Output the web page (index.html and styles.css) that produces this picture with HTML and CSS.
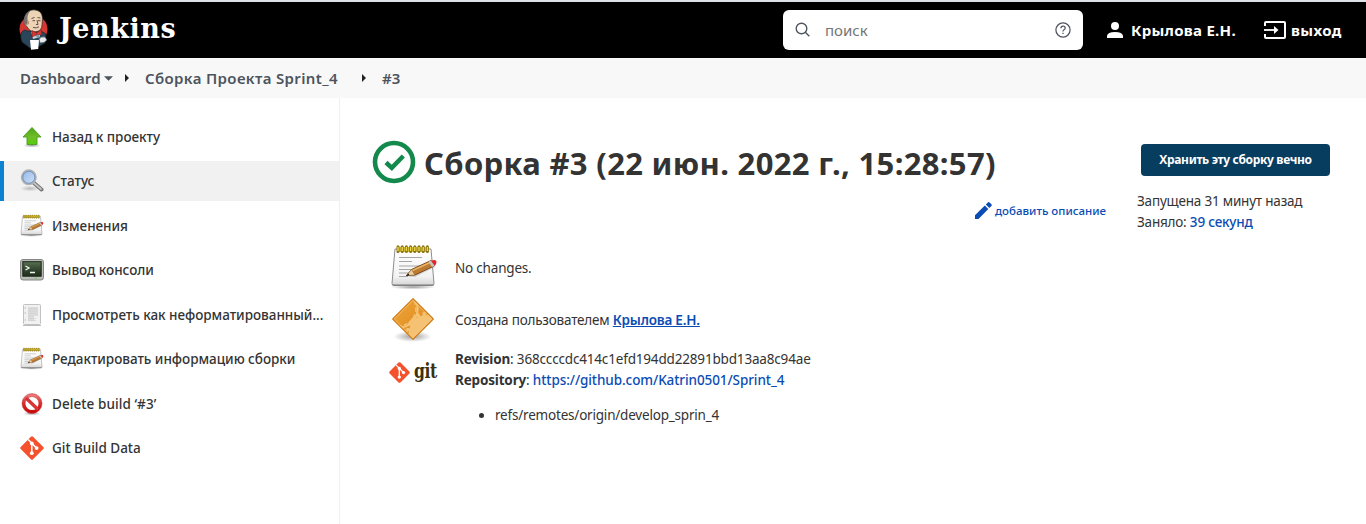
FILE: index.html
```html
<!DOCTYPE html>
<html lang="ru">
<head>
<meta charset="utf-8">
<title>Сборка #3 - Jenkins</title>
<link rel="stylesheet" href="styles.css">
</head>
<body>
<svg class="defs" width="0" height="0" aria-hidden="true">
  <defs>
    <linearGradient id="green" x2="0" y2="1"><stop stop-color="#49a414"/><stop offset=".55" stop-color="#70bd27"/><stop offset="1" stop-color="#55cf08"/></linearGradient>
    <linearGradient id="paper" x2="0" y2="1"><stop stop-color="#fff"/><stop offset=".75" stop-color="#f3f3f3"/><stop offset="1" stop-color="#d4d4d4"/></linearGradient>
    <linearGradient id="lens" x2="1" y2="1"><stop stop-color="#8fb6e8"/><stop offset="1" stop-color="#d3e4f8"/></linearGradient>
    <linearGradient id="screen" x2="0" y2="1"><stop stop-color="#587052"/><stop offset=".5" stop-color="#354832"/><stop offset="1" stop-color="#1e2f1b"/></linearGradient>
    <linearGradient id="ban" x2="0" y2="1"><stop stop-color="#e77878"/><stop offset=".5" stop-color="#d62d2d"/><stop offset="1" stop-color="#c80b0b"/></linearGradient>
    <linearGradient id="amber" x2="1" y2="1"><stop stop-color="#eda63c"/><stop offset="1" stop-color="#dc8413"/></linearGradient>
    <radialGradient id="shade"><stop stop-color="#000" stop-opacity=".38"/><stop offset="1" stop-color="#000" stop-opacity="0"/></radialGradient>
    <clipPath id="diamond"><path d="M22.500 2.500L42.500 22.500 22.500 42.500 2.500 22.500z"/></clipPath>
    <symbol id="notepad" viewBox="0 0 48 48">
      <ellipse cx="23" cy="43" rx="23" ry="2.500" fill="url(#shade)"/>
      <path d="M5 5h36l3 34.500q0 2-2 2H4q-2 0-2-2z" fill="url(#paper)" stroke="#8d8d8d"/>
      <path d="M2.500 41h41" stroke="#777" stroke-width="1.200"/>
      <path d="M9 13.500h23M9 17.500h13M9 22h24M9 25.500h16M9 29h11M9 32.500h9" stroke="#a5a5a5" stroke-width="1"/>
      <path d="M7 3h32v5H7z" fill="#d1bd3f"/>
      <path d="M8 2.800v4.800M12.200 2.800v4.800M16.400 2.800v4.800M20.600 2.800v4.800M24.800 2.800v4.800M29 2.800v4.800M33.200 2.800v4.800M37.400 2.800v4.800" stroke="#8a7414" stroke-width="3" stroke-linecap="round"/>
      <path d="M8 3v4M12.200 3v4M16.400 3v4M20.600 3v4M24.800 3v4M29 3v4M33.200 3v4M37.400 3v4" stroke="#efd94a" stroke-width="1.400"/>
      <path d="M18 33l24-11 3 1-20 10z" fill="#000" opacity=".14"/>
      <path d="M16.500 31.500l5-6L41 16.500l3.800 5.200L25 31z" fill="#bd7a31" stroke="#6f410f" stroke-width=".9"/>
      <path d="M22 26.700l18.500-8.400" stroke="#e8b468" stroke-width="1.500"/>
      <path d="M16.500 31.500l5-6 3.300 5.400z" fill="#ecd0a0" stroke="#8b6636" stroke-width=".5"/><path d="M16 32l2.200-2.600 1.300 1.900z" fill="#111"/>
      <path d="M38.500 17.700l2.500-1.200 3.800 5.200-2.800 1.300z" fill="#c4c4c4"/>
      <path d="M41 16.500q5.500-1.700 5.500 1.300 0 2.500-1.700 3.900z" fill="#e7252b"/>
    </symbol>
    <symbol id="gitmark" viewBox="0 0 24 24">
      <path d="M10.900.7q1.100-1 2.200 0l10.200 10.200q1 1.100 0 2.200L13.100 23.300q-1.100 1-2.200 0L.7 13.100q-1-1.100 0-2.200z" fill="#f4512c"/>
      <path d="M8.200 3.600l3.600 3.700v9.600M12 7.500l4.600 4.600" fill="none" stroke="#fff" stroke-width="1.500"/>
      <circle cx="11.800" cy="7.400" r="1.900" fill="#fff"/><circle cx="11.800" cy="17.200" r="1.900" fill="#fff"/><circle cx="16.600" cy="12.100" r="1.900" fill="#fff"/>
    </symbol>
  </defs>
</svg>

<header class="topbar">
  <a class="brand">
    <svg class="butler" width="30" height="42" viewBox="0 0 30 42">
      <ellipse cx="14.500" cy="20" rx="14" ry="13.500" fill="#d33833"/>
      <path d="M2 24q-1 4 1 9l8 6 8-1 7-4 1-9-5-3H9l-4-1z" fill="#2b4658" stroke="#142530" stroke-width=".7"/>
      <path d="M12 22l5 5 4-5v6l-7 2z" fill="#c9d0d4"/>
      <path d="M6 9Q8 .6 15 .8q8 .4 8.500 8l-.5 7q0 6-6 7-6 .5-9-5Q5 16 6 12z" fill="#edd3b6" stroke="#2b2725" stroke-width=".7"/>
      <path d="M5.500 15Q3.500 7 8.500 3.300l3-1.600q-3.500 4-3 8.300L8.500 16z" fill="#77716d"/>
      <path d="M7.500 11q2.500 0 2 4" fill="none" stroke="#a98065" stroke-width=".8"/>
      <path d="M12.500 9.500l3-1M18.500 8.500l3 .5M13.500 11.700h2.500M19 11.700h2.500M18 11l1 4.500h-2M14 18.500q3.500 1 6-.7" fill="none" stroke="#54423a" stroke-width=".9"/>
      <path d="M13 21.500l4.500 2.500 4.500-3.500 1 5.500-5-.5-5 2.500z" fill="#d33833" stroke="#7c1714" stroke-width=".5"/>
      <circle cx="19" cy="27.500" r="1.600" fill="#7896a7"/>
      <path d="M11 31h9l-.8 9-7.200.7z" fill="#fff"/>
      <path d="M20 30q2-3 6-2l2 3-3 2.500-4 .5z" fill="#e6e8ea" stroke="#43525c" stroke-width=".7"/>
    </svg>
    <span class="brand-name">Jenkins</span>
  </a>
  <div class="search">
    <svg width="16" height="16" viewBox="0 0 16 16" fill="none" stroke="#4d545d" stroke-width="1.400"><circle cx="6.500" cy="6.500" r="5.300"/><path d="M10.300 10.300l4 4"/></svg>
    <span class="search-text">поиск</span>
    <svg width="16" height="16" viewBox="0 0 16 16" fill="none" stroke="#4d545d" stroke-width="1.250"><circle cx="8" cy="8" r="7.100"/><path d="M5.900 6.200q.1-2.200 2.200-2.200 2.100.1 2.100 2 0 1.100-1.200 1.700Q8 8.200 8 9.500"/><path d="M8 10.800v1.300"/></svg>
  </div>
  <a class="user">
    <svg width="16" height="16" viewBox="0 0 16 16" fill="#fff"><circle cx="8" cy="4" r="4"/><path d="M0 16v-2q.5-4 8-4t8 4v2z"/></svg>
    <span class="user-name">Крылова Е.Н.</span>
  </a>
  <a class="logout">
    <svg width="22" height="18" viewBox="0 0 22 18" fill="none" stroke="#fff" stroke-width="2"><path d="M1 5V2q0-1 1-1h18q1 0 1 1v14q0 1-1 1H2q-1 0-1-1v-3"/><path d="M0 9h12" stroke-width="1.800"/><path d="M10 5l4.500 4-4.500 4z" fill="#fff" stroke="none"/></svg>
    <span class="logout-text">выход</span>
  </a>
</header>

<nav class="crumbs">
  <span class="crumb-a">Dashboard</span>
  <svg class="caret" width="9" height="5" viewBox="0 0 8 4"><path d="M0 0h8L4 4z" fill="#4d545d"/></svg>
  <svg class="next-a" width="4" height="8" viewBox="0 0 4 8"><path d="M0 0l4 4-4 4z" fill="#222"/></svg>
  <span class="crumb-b">Сборка Проекта Sprint_4</span>
  <svg class="next-b" width="4" height="8" viewBox="0 0 4 8"><path d="M0 0l4 4-4 4z" fill="#222"/></svg>
  <span class="crumb-c">#3</span>
</nav>

<div class="page">
  <aside class="side">
    <a class="task"><svg width="24" height="24" viewBox="0 0 24 24"><ellipse cx="12" cy="20.500" rx="9" ry="2" fill="url(#shade)"/><path d="M12 2.500l9 9.500h-4v7.500H7V12H3z" fill="url(#green)" stroke="#4c9a22" stroke-width=".9" stroke-linejoin="round"/></svg><span class="task-label">Назад к проекту</span></a>
    <a class="task active"><svg width="24" height="24" viewBox="0 0 24 24"><ellipse cx="10" cy="19.500" rx="10" ry="3" fill="url(#shade)" opacity=".6"/><path d="M14 14l7.500 6.500" stroke="#777" stroke-width="4" stroke-linecap="round"/><path d="M13.500 13.500l7.500 6.500" stroke="#c4c4c4" stroke-width="1.700" stroke-linecap="round"/><circle cx="8.800" cy="8.300" r="7" fill="url(#lens)" stroke="#b0b2b4" stroke-width="2"/><circle cx="8.800" cy="8.300" r="6" fill="none" stroke="#6687b7" stroke-width=".8"/></svg><span class="task-label">Статус</span></a>
    <a class="task"><svg width="24" height="24"><use href="#notepad"/></svg><span class="task-label">Изменения</span></a>
    <a class="task"><svg width="24" height="24" viewBox="0 0 24 24"><rect x=".5" y="1.500" width="23" height="20.500" rx="2.500" fill="#b8bab6" stroke="#858783"/><rect x="2.800" y="3.700" width="18.400" height="14.500" fill="url(#screen)" stroke="#1d2519"/><path d="M5.500 8l3.500 2-3.500 2M10 14.500h5" fill="none" stroke="#f2f6ef" stroke-width="1.300"/><path d="M15 20.200h2" stroke="#6cc840"/></svg><span class="task-label">Вывод консоли</span></a>
    <a class="task"><svg width="24" height="24" viewBox="0 0 24 24"><path d="M3 22.500h18" stroke="#bbb"/><rect x="3.500" y="1.500" width="17" height="20" rx="1" fill="#f1f1f1" stroke="#c2c2c2"/><path d="M8 4h10v9h-4v5H8z" fill="#dcdcdc"/><path d="M8 5.500h9M8 8h9M8 10.500h9M8 13h5M8 15.500h8M8 17.500h8" stroke="#d0d0d0" stroke-width=".7"/><path d="M4.500 5h1.500M4.500 10h1.500M4.500 17h1.500" stroke="#bbb"/></svg><span class="task-label">Просмотреть как неформатированный...</span></a>
    <a class="task"><svg width="24" height="24"><use href="#notepad"/></svg><span class="task-label">Редактировать информацию сборки</span></a>
    <a class="task"><svg width="24" height="24" viewBox="0 0 24 24"><ellipse cx="12" cy="21.500" rx="9" ry="2" fill="url(#shade)"/><circle cx="12" cy="11.500" r="8.300" fill="#fff" stroke="url(#ban)" stroke-width="3.500"/><path d="M6 6l12 11.500" stroke="#d83434" stroke-width="3.300"/><circle cx="12" cy="11.500" r="10" fill="none" stroke="#c53b3b" stroke-width=".5"/></svg><span class="task-label delete">Delete build ‘#3’</span></a>
    <a class="task"><svg width="24" height="24"><use href="#gitmark"/></svg><span class="task-label">Git Build Data</span></a>
  </aside>

  <main class="main">
    <div class="content">
      <h1 class="title">
        <svg width="44" height="44" viewBox="0 0 44 44" fill="none" stroke="#138a4b"><circle cx="22" cy="22" r="19" stroke-width="4.600"/><path d="M14 22.500l5.800 5.300L31.300 16" stroke-width="4.500"/></svg>
        <span class="title-text">Сборка #3 (22 июн. 2022 г., 15:28:57)</span>
      </h1>
      <a class="describe">
        <svg width="17" height="17" viewBox="0 0 17 17" fill="#0b4cb4"><path d="M0 13.300L9.800 3.500l3.500 3.500L3.500 17H0zM10.800 2.500L12.800.5q.9-.8 1.800 0l1.800 1.700q.9.900 0 1.800L14.300 6z"/></svg>
        <span class="describe-text">добавить описание</span>
      </a>
      <div class="row row-changes">
        <svg width="48" height="48"><use href="#notepad"/></svg>
        <span class="no-changes">No changes.</span>
      </div>
      <div class="row row-cause">
        <svg width="48" height="48" viewBox="-.5 -.5 48 48">
          <ellipse cx="22" cy="40" rx="19" ry="5.500" fill="url(#shade)"/>
          <path d="M22.500 2L43 22.500 22.500 43 2 22.500z" fill="url(#amber)"/>
          <g clip-path="url(#diamond)" fill="#f5c274">
            <circle cx="36" cy="36" r="17.500"/>
            <circle cx="36" cy="36" r="18.500" fill="none" stroke="#f5c274" stroke-width="4" stroke-dasharray="3.200 2.700"/>
            <circle cx="8" cy="12" r="17.500" fill="none" stroke="#f5c274" stroke-width="1.600" stroke-dasharray="3.500 2.500"/>
            <circle cx="8" cy="12" r="19.200" fill="none" stroke="#f5c274" stroke-width="2"/>
          </g>
          <path d="M22.500 2.200L42.800 22.500 22.500 42.800 2.200 22.500z" fill="none" stroke="#cf7c17" stroke-width="1.100" stroke-linejoin="round"/>
          <path d="M22.500 3.800L41.200 22.500 22.500 41.200 3.800 22.500z" fill="none" stroke="#f8c87e" stroke-width=".8"/>
        </svg>
        <span><span class="cause">Создана пользователем</span> <a class="link">Крылова Е.Н.</a></span>
      </div>
      <div class="row row-git">
        <div class="git-logo"><svg width="21" height="21"><use href="#gitmark"/></svg><span class="git-word">git</span></div>
        <div class="git-info">
          <div><b>Revision</b>: <span class="hash">368ccccdc414c1efd194dd22891bbd13aa8c94ae</span></div>
          <div><b>Repository</b>: <a class="link-plain repo">https://github.com/Katrin0501/Sprint_4</a></div>
          <ul class="refs"><li><span>refs/remotes/origin/develop_sprin_4</span></li></ul>
        </div>
      </div>
    </div>
    <div class="meta">
      <button class="keep">Хранить эту сборку вечно</button>
      <div class="started">Запущена 31 минут назад</div>
      <div class="took">Заняло: <a class="link-plain">39 секунд</a></div>
    </div>
  </main>
</div>
</body>
</html>
```

FILE: styles.css
```css
* { box-sizing: border-box; }
body { margin: 0; height: 524px; overflow: hidden; background: #fff; color: #333; font: 13.5px/21px "Noto Sans", "Open Sans", sans-serif; }
svg { display: block; flex: none; }
.defs { position: absolute; }
span, a, b { white-space: nowrap; }

.topbar { display: flex; align-items: center; height: 58px; border-top: 2px solid #dee1e6; background: #000; color: #fff; font-weight: 700; font-size: 15px; }
.brand { display: flex; align-items: center; width: 783px; padding-left: 19px; gap: 10px; }
.brand-name { font: 700 27px/34px "DejaVu Serif", serif; letter-spacing: .55px; padding-bottom: 3px; }
.search { display: flex; align-items: center; width: 300px; height: 40px; padding: 0 12px; border-radius: 6px; background: #fff; }
.search-text { flex: 1; padding-left: 14px; color: #757575; font-weight: 400; font-size: 15px; }
.user { display: flex; align-items: center; gap: 8px; margin-left: 24px; width: 157px; }
.user-name { letter-spacing: .28px; }
.logout { display: flex; align-items: center; gap: 5px; }
.logout-text { letter-spacing: .4px; }

.crumbs { display: flex; align-items: center; height: 40px; padding-left: 20px; background: #f8f8f8; color: #4d545d; font-weight: 600; font-size: 15px; }
.crumb-a { width: 84px; letter-spacing: .1px; }
.next-a { margin-left: 12px; margin-right: 16px; }
.crumb-b { width: 217px; letter-spacing: .36px; }
.crumb-c { margin-left: 16px; }

.page { display: flex; height: 426px; }
.side { display: flex; flex-direction: column; gap: 4.5px; width: 340px; padding-top: 18.9px; border-right: 1px solid #f0f0f0; }
.task { display: flex; flex: none; align-items: center; gap: 8px; height: 40px; padding-left: 20px; font-weight: 500; letter-spacing: -.03px; }
.task-label { padding-top: .3px; }
.active { background: #f1f1f1; border-left: 4px solid #0b83d2; padding-left: 16px; }
.delete { letter-spacing: .08px; }

.main { display: flex; flex: 1; padding-left: 32px; }
.content { width: 765px; padding-top: 42px; }
.title { display: flex; align-items: center; gap: 8px; margin: 0; height: 44px; font-weight: 700; font-size: 31px; line-height: 44px; letter-spacing: .32px; }
.title-text { padding-top: 1px; }
.describe { display: flex; align-items: center; justify-content: flex-end; gap: 3px; height: 22px; margin-top: 15px; padding-right: 31px; color: #0b4cb4; font-weight: 500; font-size: 11.5px; }
.row { display: flex; padding-left: 18px; gap: 17px; letter-spacing: -.2px; }
.row-changes { align-items: center; height: 48px; margin-top: 23px; }
.row-cause { align-items: center; height: 48px; margin-top: 4px; }
.row-git { margin-top: 5px; letter-spacing: -.17px; }
.git-logo { display: flex; align-items: center; gap: 4px; width: 49px; height: 46px; margin-left: -1px; }
.git-word { color: #3f2f0b; font: 700 20px/28px "DejaVu Serif", serif; letter-spacing: -.5px; padding-bottom: 3px; transform: scaleX(.78); transform-origin: 0 50%; }
.link { color: #0b4cb4; font-weight: 600; text-decoration: underline; letter-spacing: -.2px; }
.link-plain { color: #0b4cb4; font-weight: 500; }
.repo { letter-spacing: -.08px; }
.refs { margin: 14px 0 0; padding-left: 40px; letter-spacing: -.2px; }

.meta { padding-top: 46px; letter-spacing: -.2px; }
.keep { display: flex; align-items: center; justify-content: center; width: 189px; height: 32px; margin-left: 4px; margin-bottom: 15px; padding: 0; border: 0; border-radius: 4px; background: #073d5f; color: #fff; font: 700 12px/20px "Noto Sans", "Open Sans", sans-serif; letter-spacing: -.34px; white-space: nowrap; }
```
